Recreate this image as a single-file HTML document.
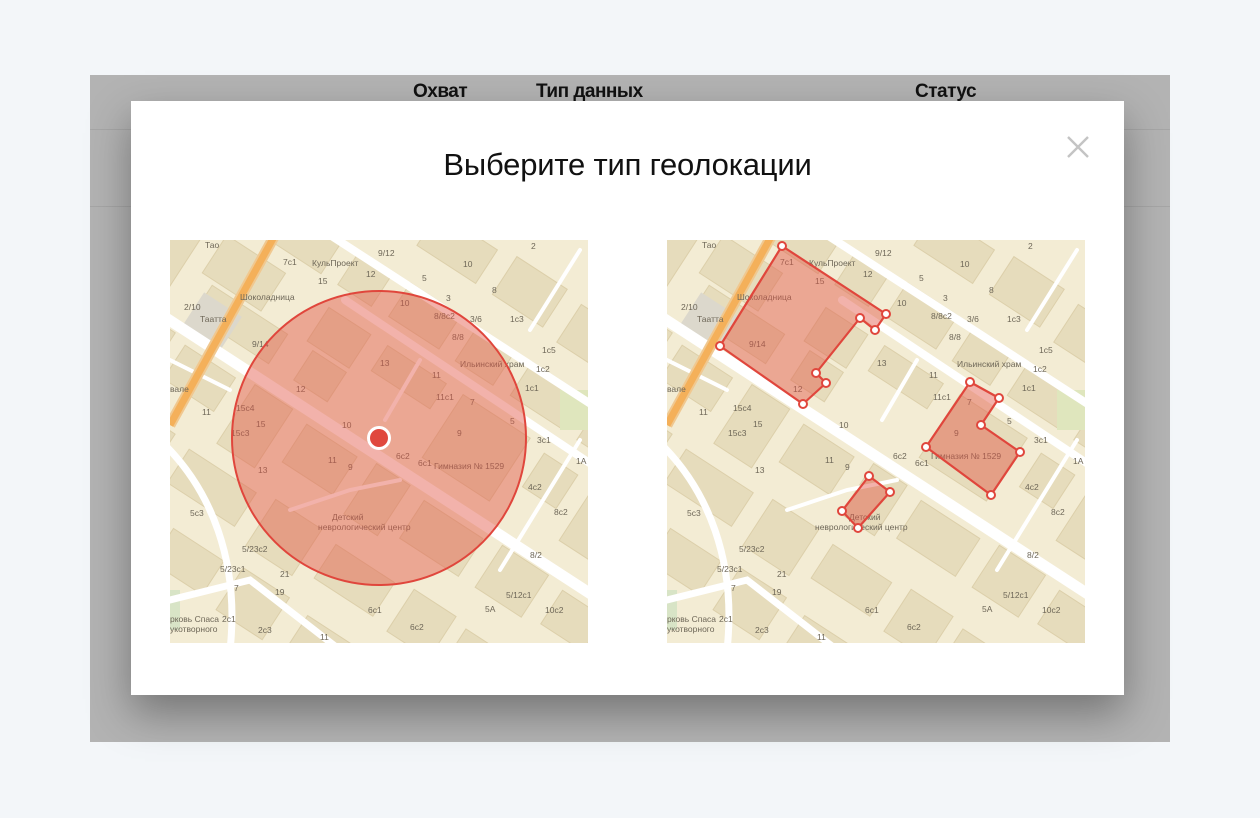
<!DOCTYPE html>
<html><head><meta charset="utf-8"><style>
html,body{margin:0;padding:0}
body{width:1260px;height:818px;background:#f3f6f9;position:relative;overflow:hidden;font-family:"Liberation Sans",sans-serif}
.ov{position:absolute;left:90px;top:75px;width:1080px;height:667px;background:#b3b3b3}
.ov .l1{position:absolute;left:0;right:0;top:54px;height:1px;background:#a6a6a6}
.ov .l2{position:absolute;left:0;right:0;top:131px;height:1px;background:#a6a6a6}
.h{position:absolute;top:6px;font-weight:bold;font-size:19px;color:#111;letter-spacing:-0.5px}
.modal{position:absolute;left:131px;top:101px;width:993px;height:594px;background:#fff;box-shadow:0 18px 40px rgba(0,0,0,.35)}
.title{position:absolute;left:0;right:0;top:46px;text-align:center;font-size:31px;color:#111;letter-spacing:-0.2px}
.x{position:absolute;left:936px;top:35px}
.map{position:absolute;top:139px;width:418px;height:403px}
svg text{font-family:"Liberation Sans",sans-serif;font-size:8.5px;fill:#6e6758}
</style></head><body>
<div class="ov"><div class="l1"></div><div class="l2"></div>
<div class="h" style="left:323px">Охват</div><div class="h" style="left:446px">Тип данных</div><div class="h" style="left:825px">Статус</div></div>
<div class="modal">
<div class="title">Выберите тип геолокации</div>
<svg class="x" width="22" height="22" viewBox="0 0 22 22"><path d="M1 1L21 21M21 1L1 21" stroke="#c4c4c4" stroke-width="2.4"/></svg>

<svg width="0" height="0" style="position:absolute"><defs>
<g id="base">
<rect width="418" height="403" fill="#f3ecd4"/>
<g transform="rotate(33)" fill="#e6dcbc" stroke="#dccfaa" stroke-width="1">
<rect x="60" y="-180" width="60" height="40"/><rect x="140" y="-175" width="50" height="45"/><rect x="210" y="-170" width="70" height="40"/><rect x="300" y="-175" width="60" height="45"/><rect x="380" y="-170" width="70" height="45"/>
<rect x="20" y="-90" width="40" height="35"/><rect x="90" y="-92" width="55" height="38"/><rect x="165" y="-92" width="40" height="38"/><rect x="225" y="-95" width="60" height="40"/><rect x="305" y="-92" width="45" height="38"/><rect x="370" y="-95" width="60" height="40"/><rect x="450" y="-92" width="50" height="38"/>
<rect x="-30" y="-30" width="55" height="75"/><rect x="45" y="-35" width="70" height="45"/><rect x="60" y="15" width="90" height="35"/><rect x="170" y="-30" width="50" height="40"/><rect x="180" y="15" width="40" height="35"/><rect x="240" y="-30" width="70" height="30"/><rect x="330" y="-30" width="80" height="75"/><rect x="430" y="-25" width="40" height="40"/><rect x="490" y="-30" width="60" height="70"/>
<rect x="-60" y="75" width="45" height="70"/><rect x="5" y="75" width="50" height="45"/><rect x="70" y="80" width="60" height="40"/><rect x="150" y="75" width="45" height="70"/><rect x="215" y="80" width="60" height="45"/><rect x="295" y="75" width="40" height="60"/><rect x="355" y="80" width="70" height="45"/><rect x="445" y="75" width="55" height="50"/><rect x="520" y="80" width="50" height="40"/>
<rect x="-30" y="165" width="70" height="40"/><rect x="60" y="160" width="50" height="55"/><rect x="130" y="165" width="80" height="40"/><rect x="230" y="160" width="55" height="55"/><rect x="305" y="165" width="70" height="40"/><rect x="395" y="160" width="50" height="50"/><rect x="460" y="165" width="60" height="40"/>
<rect x="-80" y="235" width="60" height="45"/><rect x="0" y="240" width="70" height="40"/><rect x="90" y="235" width="50" height="50"/><rect x="160" y="240" width="60" height="40"/><rect x="240" y="235" width="55" height="50"/><rect x="320" y="240" width="60" height="40"/>
</g>
<rect x="20" y="60" width="45" height="45" fill="#dcd8cc" transform="rotate(33 40 80)"/>
<rect x="390" y="150" width="28" height="40" fill="#dfe6bd"/>
<rect x="0" y="350" width="10" height="40" fill="#d8e4c6"/>
<g fill="none" stroke="#fff" stroke-linecap="round">
<path d="M-10 74 L430 360" stroke-width="11"/>
<path d="M160 -5 L430 170" stroke-width="8"/>
<path d="M175 60 L430 230" stroke-width="8"/>
<path d="M-5 205 C40 250 70 320 60 410" stroke-width="7"/>
<path d="M0 360 L80 340 L170 410" stroke-width="7"/>
<path d="M360 90 L410 10" stroke-width="4"/>
<path d="M330 330 L410 200" stroke-width="4"/>
<path d="M215 180 L250 120" stroke-width="4"/>
<path d="M120 270 L180 250 L230 240" stroke-width="4"/>
<path d="M0 120 L60 150" stroke-width="4"/>
</g>
<path d="M0 185 L105 -5" stroke="#f0c890" stroke-width="11"/>
<path d="M0 185 L105 -5" stroke="#f4b05a" stroke-width="7"/>
</g>
</defs></svg>

<svg class="map" style="left:39px" viewBox="0 0 418 403">
<use href="#base"/>
<g>
<text x="35" y="8">Тао</text><text x="113" y="25">7с1</text><text x="142" y="26">КульПроект</text><text x="208" y="16">9/12</text><text x="361" y="9">2</text><text x="293" y="27">10</text><text x="196" y="37">12</text><text x="148" y="44">15</text><text x="252" y="41">5</text><text x="276" y="61">3</text><text x="322" y="53">8</text><text x="70" y="60">Шоколадница</text><text x="14" y="70">2/10</text><text x="30" y="82">Таатта</text><text x="230" y="66">10</text><text x="300" y="82">3/6</text><text x="340" y="82">1с3</text><text x="264" y="79">8/8с2</text><text x="282" y="100">8/8</text><text x="82" y="107">9/14</text><text x="372" y="113">1с5</text><text x="290" y="127">Ильинский храм</text><text x="366" y="132">1с2</text><text x="210" y="126">13</text><text x="262" y="138">11</text><text x="355" y="151">1с1</text><text x="126" y="152">12</text><text x="0" y="152">вале</text><text x="266" y="160">11с1</text><text x="300" y="165">7</text><text x="32" y="175">11</text><text x="66" y="171">15с4</text><text x="86" y="187">15</text><text x="340" y="184">5</text><text x="61" y="196">15с3</text><text x="172" y="188">10</text><text x="367" y="203">3с1</text><text x="287" y="196">9</text><text x="226" y="219">6с2</text><text x="264" y="229">Гимназия № 1529</text><text x="158" y="223">11</text><text x="178" y="230">9</text><text x="248" y="226">6с1</text><text x="406" y="224">1A</text><text x="88" y="233">13</text><text x="358" y="250">4с2</text><text x="384" y="275">8с2</text><text x="162" y="280">Детский</text><text x="148" y="290">неврологический центр</text><text x="20" y="276">5с3</text><text x="360" y="318">8/2</text><text x="72" y="312">5/23с2</text><text x="50" y="332">5/23с1</text><text x="110" y="337">21</text><text x="64" y="351">7</text><text x="105" y="355">19</text><text x="336" y="358">5/12с1</text><text x="375" y="373">10с2</text><text x="315" y="372">5A</text><text x="198" y="373">6с1</text><text x="0" y="382">рковь Спаса</text><text x="52" y="382">2с1</text><text x="0" y="392">укотворного</text><text x="88" y="393">2с3</text><text x="240" y="390">6с2</text><text x="150" y="400">11</text>
</g>
<circle cx="209" cy="198" r="147" fill="#e35545" fill-opacity="0.45" stroke="#e0463c" stroke-width="2"/>
<circle cx="209" cy="198" r="12" fill="#fff"/><circle cx="209" cy="198" r="9" fill="#e0483e"/>
</svg>

<svg class="map" style="left:536px" viewBox="0 0 418 403">
<use href="#base"/>
<g>
<text x="35" y="8">Тао</text><text x="113" y="25">7с1</text><text x="142" y="26">КульПроект</text><text x="208" y="16">9/12</text><text x="361" y="9">2</text><text x="293" y="27">10</text><text x="196" y="37">12</text><text x="148" y="44">15</text><text x="252" y="41">5</text><text x="276" y="61">3</text><text x="322" y="53">8</text><text x="70" y="60">Шоколадница</text><text x="14" y="70">2/10</text><text x="30" y="82">Таатта</text><text x="230" y="66">10</text><text x="300" y="82">3/6</text><text x="340" y="82">1с3</text><text x="264" y="79">8/8с2</text><text x="282" y="100">8/8</text><text x="82" y="107">9/14</text><text x="372" y="113">1с5</text><text x="290" y="127">Ильинский храм</text><text x="366" y="132">1с2</text><text x="210" y="126">13</text><text x="262" y="138">11</text><text x="355" y="151">1с1</text><text x="126" y="152">12</text><text x="0" y="152">вале</text><text x="266" y="160">11с1</text><text x="300" y="165">7</text><text x="32" y="175">11</text><text x="66" y="171">15с4</text><text x="86" y="187">15</text><text x="340" y="184">5</text><text x="61" y="196">15с3</text><text x="172" y="188">10</text><text x="367" y="203">3с1</text><text x="287" y="196">9</text><text x="226" y="219">6с2</text><text x="264" y="219">Гимназия № 1529</text><text x="158" y="223">11</text><text x="178" y="230">9</text><text x="248" y="226">6с1</text><text x="406" y="224">1A</text><text x="88" y="233">13</text><text x="358" y="250">4с2</text><text x="384" y="275">8с2</text><text x="182" y="280">Детский</text><text x="148" y="290">неврологический центр</text><text x="20" y="276">5с3</text><text x="360" y="318">8/2</text><text x="72" y="312">5/23с2</text><text x="50" y="332">5/23с1</text><text x="110" y="337">21</text><text x="64" y="351">7</text><text x="105" y="355">19</text><text x="336" y="358">5/12с1</text><text x="375" y="373">10с2</text><text x="315" y="372">5A</text><text x="198" y="373">6с1</text><text x="0" y="382">рковь Спаса</text><text x="52" y="382">2с1</text><text x="0" y="392">укотворного</text><text x="88" y="393">2с3</text><text x="240" y="390">6с2</text><text x="150" y="400">11</text>
</g>
<g fill="#e35545" fill-opacity="0.45" stroke="#e0463c" stroke-width="2.2" stroke-linejoin="round">
<polygon points="115,6 219,74 208,90 193,78 149,133 159,143 136,164 53,106"/>
<polygon points="303,142 332,158 314,185 353,212 324,255 259,207"/>
<polygon points="202,236 223,252 191,288 175,271"/>
</g>
<g fill="#fff" stroke="#e0463c" stroke-width="2">
<circle cx="115" cy="6" r="4"/><circle cx="219" cy="74" r="4"/><circle cx="208" cy="90" r="4"/><circle cx="193" cy="78" r="4"/><circle cx="149" cy="133" r="4"/><circle cx="159" cy="143" r="4"/><circle cx="136" cy="164" r="4"/><circle cx="53" cy="106" r="4"/>
<circle cx="303" cy="142" r="4"/><circle cx="332" cy="158" r="4"/><circle cx="314" cy="185" r="4"/><circle cx="353" cy="212" r="4"/><circle cx="324" cy="255" r="4"/><circle cx="259" cy="207" r="4"/>
<circle cx="202" cy="236" r="4"/><circle cx="223" cy="252" r="4"/><circle cx="191" cy="288" r="4"/><circle cx="175" cy="271" r="4"/>
</g>
</svg>
</div>
</body></html>
